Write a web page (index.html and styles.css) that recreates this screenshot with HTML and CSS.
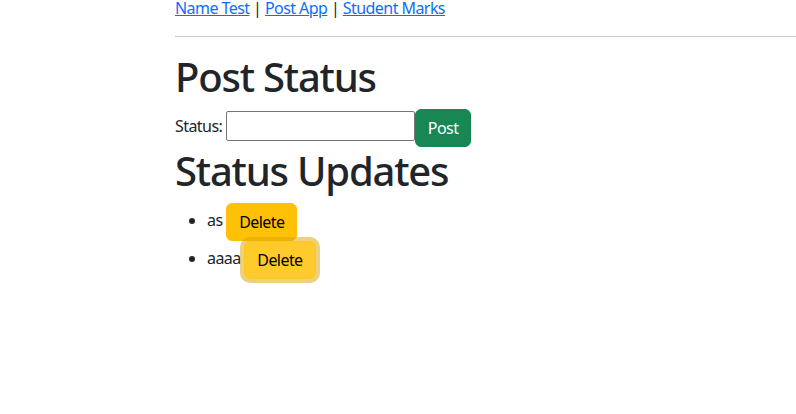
FILE: index.html
```html
<!DOCTYPE html>
<html>
<head>
<meta charset="utf-8">
<link rel="stylesheet" href="styles.css">
</head>
<body>
<div class="page">
  <nav class="nav"><a href="#">Name Test</a> | <a href="#">Post App</a> | <a href="#">Student Marks</a></nav>
  <hr class="rule">
  <h1 class="title">Post Status</h1>
  <div class="form-row"><label class="label">Status:</label> <input class="status-input" type="text"><button class="btn btn-post">Post</button></div>
  <h1 class="title">Status Updates</h1>
  <ul class="updates">
    <li class="item">as <button class="btn btn-delete">Delete</button></li>
    <li class="item">aaaa <button class="btn btn-delete btn-focus">Delete</button></li>
  </ul>
</div>
</body>
</html>
```
FILE: styles.css
```css
* { box-sizing: border-box; }
html, body { margin: 0; padding: 0; background: #fff; }
body {
  font-family: "Noto Sans", "Open Sans", sans-serif;
  font-size: 16px;
  line-height: 1.5;
  color: #212529;
  letter-spacing: -0.035em;
}
.page { margin-left: 175px; }
.nav { line-height: 16px; padding-top: 0; }
.nav a { color: #0d6efd; text-decoration: underline; }
.rule {
  margin: 20px 0 16px 0;
  border: 0;
  border-top: 1px solid #c8c8c8;
  height: 0;
}
.title {
  font-size: 40px;
  font-weight: 500;
  line-height: 1.2;
  margin: 0 0 8px 0;
  letter-spacing: -0.03em;
}
.form-row { height: 38px; }
.status-input {
  font: inherit;
  line-height: inherit;
  width: 189px;
  height: 30px;
  padding: 1px 2px;
  border: 1px solid #767676;
  border-radius: 2px;
  vertical-align: baseline;
}
.btn {
  display: inline-block;
  font: inherit;
  letter-spacing: inherit;
  line-height: 1.5;
  padding: 6px 12px;
  border: 1px solid transparent;
  border-radius: 6px;
  vertical-align: middle;
  cursor: pointer;
}
.btn-post { background: #198754; border-color: #198754; color: #fff; }
.updates { margin: 0 0 16px 0; padding-left: 32px; }
.btn-delete { background: #ffc107; border-color: #ffc107; color: #000; }
.btn-focus {
  background: #ffca2c;
  border-color: #ffc720;
  box-shadow: 0 0 0 4px rgba(217, 164, 6, 0.5);
}
```
